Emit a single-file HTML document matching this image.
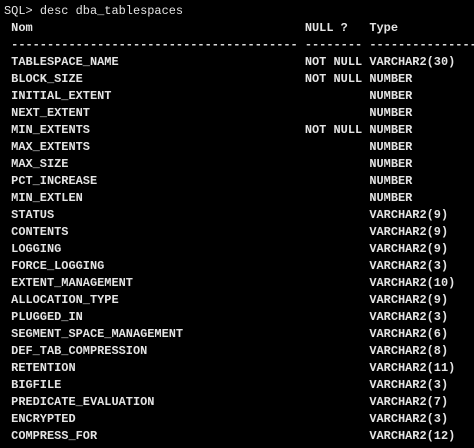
<!DOCTYPE html>
<html><head><meta charset="utf-8"><style>
html,body{margin:0;padding:0;background:#000;width:474px;height:448px;overflow:hidden}
.t{padding:3px 0 0 4px;font-family:"Liberation Mono","DejaVu Sans Mono",monospace;font-size:11.95px;line-height:17px;color:#e4e4e4;font-weight:bold;width:470px;overflow:hidden}
.t div{height:17px;overflow:hidden;white-space:pre}
.r{padding-left:1ch}
.a{display:inline-block;width:41ch}
.b{display:inline-block;width:9ch}
.n{font-weight:normal}
</style></head><body><div class="t"><div class="n">SQL&gt; desc dba_tablespaces</div><div class="r"><span class="a">Nom</span><span class="b">NULL ?</span>Type</div><div class="r"><span class="a">----------------------------------------</span><span class="b">--------</span>----------------------------</div><div class="r"><span class="a">TABLESPACE_NAME</span><span class="b">NOT NULL</span>VARCHAR2(30)</div><div class="r"><span class="a">BLOCK_SIZE</span><span class="b">NOT NULL</span>NUMBER</div><div class="r"><span class="a">INITIAL_EXTENT</span><span class="b"></span>NUMBER</div><div class="r"><span class="a">NEXT_EXTENT</span><span class="b"></span>NUMBER</div><div class="r"><span class="a">MIN_EXTENTS</span><span class="b">NOT NULL</span>NUMBER</div><div class="r"><span class="a">MAX_EXTENTS</span><span class="b"></span>NUMBER</div><div class="r"><span class="a">MAX_SIZE</span><span class="b"></span>NUMBER</div><div class="r"><span class="a">PCT_INCREASE</span><span class="b"></span>NUMBER</div><div class="r"><span class="a">MIN_EXTLEN</span><span class="b"></span>NUMBER</div><div class="r"><span class="a">STATUS</span><span class="b"></span>VARCHAR2(9)</div><div class="r"><span class="a">CONTENTS</span><span class="b"></span>VARCHAR2(9)</div><div class="r"><span class="a">LOGGING</span><span class="b"></span>VARCHAR2(9)</div><div class="r"><span class="a">FORCE_LOGGING</span><span class="b"></span>VARCHAR2(3)</div><div class="r"><span class="a">EXTENT_MANAGEMENT</span><span class="b"></span>VARCHAR2(10)</div><div class="r"><span class="a">ALLOCATION_TYPE</span><span class="b"></span>VARCHAR2(9)</div><div class="r"><span class="a">PLUGGED_IN</span><span class="b"></span>VARCHAR2(3)</div><div class="r"><span class="a">SEGMENT_SPACE_MANAGEMENT</span><span class="b"></span>VARCHAR2(6)</div><div class="r"><span class="a">DEF_TAB_COMPRESSION</span><span class="b"></span>VARCHAR2(8)</div><div class="r"><span class="a">RETENTION</span><span class="b"></span>VARCHAR2(11)</div><div class="r"><span class="a">BIGFILE</span><span class="b"></span>VARCHAR2(3)</div><div class="r"><span class="a">PREDICATE_EVALUATION</span><span class="b"></span>VARCHAR2(7)</div><div class="r"><span class="a">ENCRYPTED</span><span class="b"></span>VARCHAR2(3)</div><div class="r"><span class="a">COMPRESS_FOR</span><span class="b"></span>VARCHAR2(12)</div></div></body></html>
